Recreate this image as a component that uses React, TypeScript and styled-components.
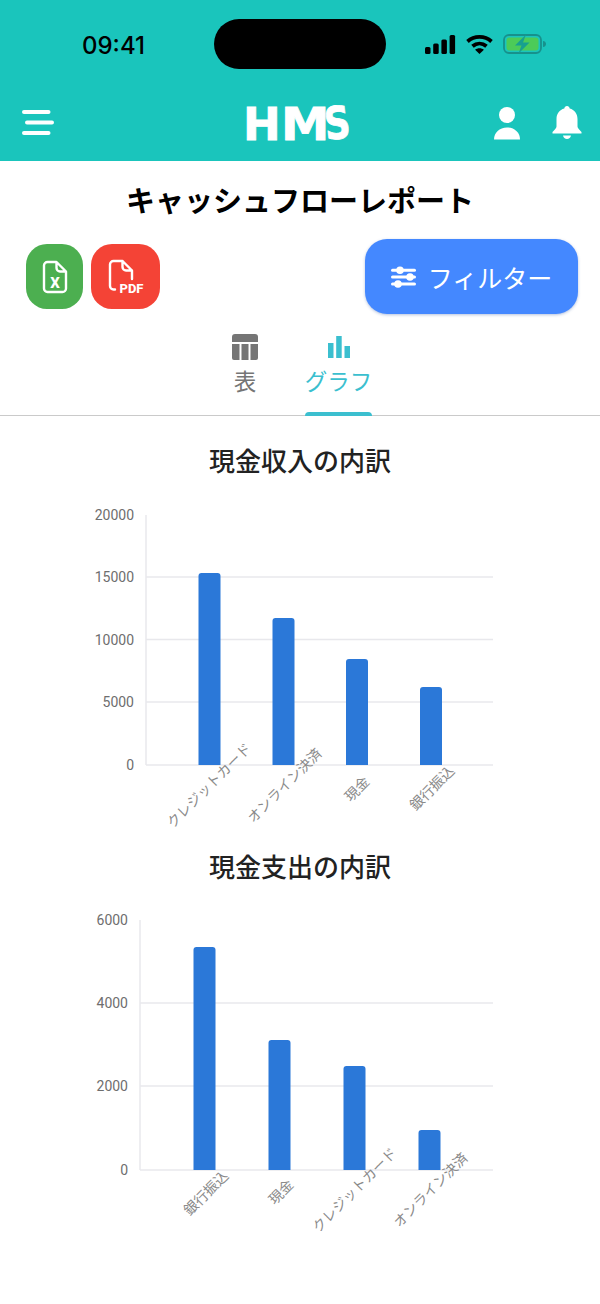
import React from "react";
import styled, { createGlobalStyle } from "styled-components";

const Global = createGlobalStyle`
  html, body { margin: 0; padding: 0; background: #fff; }
  body { font-family: "Roboto", "Noto Sans CJK JP", sans-serif; }
`;

const Page = styled.div`
  width: 600px;
  height: 1304px;
  background: #fff;
  overflow: hidden;
`;

const Header = styled.header`
  height: 161px;
  background: #1ac5bc;
  display: flex;
  flex-direction: column;
`;

const StatusBar = styled.div`
  height: 88px;
  padding-top: 19px;
  box-sizing: border-box;
  display: grid;
  grid-template-columns: 214px 172px 1fr;
`;

const Clock = styled.div`
  height: 50px;
  padding-left: 82px;
  font: 550 24px/53px "Inter", "Roboto", sans-serif;
  color: #000;
`;

const Island = styled.div`
  height: 50px;
  border-radius: 25px;
  background: #000;
`;

const StatusIcons = styled.div`
  height: 50px;
  padding-left: 39px;
  display: flex;
  align-items: center;
  gap: 10px;
`;

const NavBar = styled.nav`
  height: 73px;
  padding: 18px 18px 0 22px;
  box-sizing: border-box;
  display: grid;
  grid-template-columns: 224px 109px 1fr;
  align-items: start;
`;

const Logo = styled.div`
  display: flex;
  align-items: flex-end;
  height: 33px;
  margin-top: 2px;
  font: 700 45px/33px "DejaVu Sans", sans-serif;
  color: #fff;
  -webkit-text-stroke: 0.8px #fff;
  white-space: nowrap;
`;

const LogoLetter = styled.span<{ $tilt: number; $squeeze: number; $width: number }>`
  display: block;
  width: ${(p) => p.$width}px;
  transform: translateX(-3px) rotate(${(p) => p.$tilt}deg) scaleX(${(p) => p.$squeeze});
  transform-origin: left bottom;
`;

const NavIcons = styled.div`
  display: flex;
  justify-content: flex-end;
  gap: 32px;
  align-items: flex-start;
`;

const NavGlyph = styled.svg<{ $top?: number }>`
  display: block;
  margin-top: ${(p) => p.$top ?? 0}px;
  fill: #fff;
`;

const Title = styled.h1`
  margin: 0;
  height: 78px;
  padding-top: 16px;
  box-sizing: border-box;
  text-align: center;
  font: 700 29px/44px "Noto Sans CJK JP", sans-serif;
  color: #000;
`;

const Toolbar = styled.div`
  height: 75px;
  padding: 0 22px 0 26px;
  display: flex;
  justify-content: space-between;
`;

const ExportGroup = styled.div`
  display: flex;
  gap: 8px;
  padding-top: 5px;
`;

const ExportButton = styled.button<{ $color: string; $width: number }>`
  width: ${(p) => p.$width}px;
  height: 65px;
  border: 0;
  padding: 0;
  border-radius: 21px;
  background: ${(p) => p.$color};
  display: flex;
  align-items: center;
  justify-content: center;
`;

const FilterButton = styled.button`
  width: 213px;
  height: 75px;
  border: 0;
  padding: 0;
  border-radius: 22px;
  background: #4488ff;
  box-shadow: 0 1px 3px rgba(40, 80, 160, 0.35);
  color: #fff;
  display: flex;
  align-items: center;
  justify-content: center;
  gap: 12px;
  font: 400 25px/30px "Noto Sans CJK JP", sans-serif;
`;

const Tabs = styled.div`
  height: 102px;
  margin-bottom: 15px;
  box-sizing: border-box;
  border-bottom: 1.5px solid #cacaca;
  display: flex;
  justify-content: center;
  gap: 47px;
  padding: 20px 0 0 4px;
`;

const Tab = styled.div<{ $active?: boolean }>`
  position: relative;
  width: ${(p) => (p.$active ? 67 : 26)}px;
  height: 81px;
  display: flex;
  flex-direction: column;
  align-items: center;
  color: ${(p) => (p.$active ? "#3bbfcf" : "#757575")};
  font: 400 22.500px/30px "Noto Sans CJK JP", sans-serif;
  white-space: nowrap;
  svg { display: block; margin-bottom: 5px; }
  ${(p) =>
    p.$active
      ? `&::after { content: ""; position: absolute; left: 0; right: 0; bottom: -1px; height: 4px; border-radius: 4px 4px 0 0; background: #3bbfcf; }`
      : ""}
`;

const ChartSection = styled.section`
  display: flex;
  flex-direction: column;
`;

const ChartTitle = styled.h2`
  margin: 0;
  height: 60px;
  text-align: center;
  font: 500 26px/58px "Noto Sans CJK JP", sans-serif;
  color: #222;
`;

const ChartFrame = styled.svg`
  display: block;
  width: 600px;
  height: 346px;
`;

const AxisText = styled.text`
  font: 400 14px "Roboto", sans-serif;
  fill: #6e6e6e;
`;

const CategoryText = styled.text`
  font: 400 14px "Noto Sans CJK JP", sans-serif;
  fill: #8a8a8a;
`;

const IconText = styled.text<{ $size: number }>`
  font: 800 ${(p) => p.$size}px "Roboto", sans-serif;
  fill: #fff;
`;

type ChartData = {
  axisX: number;
  top: number;
  bottom: number;
  ticks: { label: string; y: number }[];
  bars: { x: number; top: number }[];
  labels: { text: string; cx: number; cy: number }[];
};

const Chart = ({ axisX, top, bottom, ticks, bars, labels }: ChartData) => (
  <ChartFrame viewBox="0 0 600 346">
    {ticks.map((t, i) => (
      <g key={t.label}>
        {i > 0 && <line x1={axisX} x2={493} y1={t.y} y2={t.y} stroke="#e8e8ec" strokeWidth={1.5} />}
        <AxisText x={axisX - 12} y={t.y + 5} textAnchor="end">{t.label}</AxisText>
      </g>
    ))}
    <line x1={axisX} x2={axisX} y1={top} y2={bottom} stroke="#e8e8ec" strokeWidth={1.5} />
    {bars.map((b) => (
      <path
        key={b.x}
        d={`M${b.x} ${bottom}V${b.top + 3}a3 3 0 0 1 3-3h16a3 3 0 0 1 3 3V${bottom}z`}
        fill="#2b78d8"
      />
    ))}
    {labels.map((l) => (
      <CategoryText
        key={l.text}
        x={l.cx}
        y={l.cy + 5}
        textAnchor="middle"
        transform={`rotate(-45 ${l.cx} ${l.cy})`}
      >
        {l.text}
      </CategoryText>
    ))}
  </ChartFrame>
);

const incoming: ChartData = {
  axisX: 146,
  top: 24,
  bottom: 274,
  ticks: [
    { label: "20000", y: 24 },
    { label: "15000", y: 86 },
    { label: "10000", y: 148.5 },
    { label: "5000", y: 211 },
    { label: "0", y: 274 },
  ],
  bars: [
    { x: 198.5, top: 82 },
    { x: 272.5, top: 127 },
    { x: 346, top: 168 },
    { x: 420, top: 196 },
  ],
  labels: [
    { text: "クレジットカード", cx: 209, cy: 294.5 },
    { text: "オンライン決済", cx: 284.5, cy: 294.5 },
    { text: "現金", cx: 357, cy: 298 },
    { text: "銀行振込", cx: 432, cy: 297 },
  ],
};

const outgoing: ChartData = {
  axisX: 140,
  top: 23,
  bottom: 273,
  ticks: [
    { label: "6000", y: 23 },
    { label: "4000", y: 106 },
    { label: "2000", y: 189 },
    { label: "0", y: 273 },
  ],
  bars: [
    { x: 193.5, top: 50 },
    { x: 268.5, top: 143 },
    { x: 343.5, top: 169 },
    { x: 418.5, top: 233 },
  ],
  labels: [
    { text: "銀行振込", cx: 206, cy: 296 },
    { text: "現金", cx: 281, cy: 295 },
    { text: "クレジットカード", cx: 354.5, cy: 293 },
    { text: "オンライン決済", cx: 430.5, cy: 293 },
  ],
};

const Signal = () => (
  <svg width="31" height="19" viewBox="0 0 31 19" fill="#000">
    <rect x="0" y="12" width="5.5" height="7" rx="1.5" />
    <rect x="8.2" y="8.5" width="5.5" height="10.5" rx="1.5" />
    <rect x="16.4" y="4.5" width="5.5" height="14.5" rx="1.5" />
    <rect x="24.6" y="0" width="5.5" height="19" rx="1.5" />
  </svg>
);

const Wifi = () => (
  <svg width="27" height="19" viewBox="0 0 27 19" fill="none" stroke="#000" strokeWidth="3.8">
    <path d="M1.500 6.500C8.300.4 18.700.4 25.500 6.500" />
    <path d="M6.500 11.300c4.200-3.700 9.800-3.700 14 0" />
    <path d="M13.500 19l-4.400-4.300c2.600-2 6.200-2 8.800 0z" fill="#000" stroke="none" />
  </svg>
);

const Battery = () => (
  <svg width="44" height="20" viewBox="0 0 44 20">
    <rect x="1" y="1" width="37" height="18" rx="5" fill="none" stroke="#17918c" strokeWidth="1.8" />
    <rect x="3.500" y="3.500" width="32" height="13" rx="3" fill="#4ccb58" />
    <path d="M40 7c2 .3 3 1.400 3 3s-1 2.700-3 3z" fill="#17918c" />
    <path d="M23 .5L12 11.500H18.500L15.500 19.500L26.500 8.500H20z" fill="#17a08f" />
  </svg>
);

const Menu = () => (
  <NavGlyph $top={4} width="33" height="26" viewBox="0 0 33 26">
    <rect x="0" y="0" width="28.500" height="4" rx="2" />
    <rect x="3" y="10.500" width="29" height="4" rx="2" />
    <rect x="0" y="21" width="28.500" height="4" rx="2" />
  </NavGlyph>
);

const Person = () => (
  <NavGlyph $top={1} width="26" height="33" viewBox="0 0 26 33">
    <circle cx="13" cy="8" r="8" />
    <path d="M0 32.500C0 25.500 5.500 20.500 13 20.500S26 25.500 26 32.500z" />
  </NavGlyph>
);

const Bell = () => (
  <NavGlyph width="30" height="34" viewBox="0 0 30 34">
    <path d="M15 0c1.500 0 2.500 1 2.700 2.500C22.500 3.800 25.500 7.800 25.500 13v7.500c0 1.500 2 3.500 4 5.500v1.500H.5V26c2-2 4-4 4-5.500V13C4.500 7.800 7.500 3.800 12.300 2.500 12.500 1 13.500 0 15 0z" />
    <path d="M11 29.500h8c-.4 2.200-2 3.500-4 3.500s-3.600-1.300-4-3.500z" />
  </NavGlyph>
);

const ExcelIcon = () => (
  <svg width="26" height="34" viewBox="0 0 26 34">
    <path
      d="M14.500 2H5.500A3.500 3.500 0 0 0 2 5.500v23A3.500 3.500 0 0 0 5.500 32h15a3.500 3.500 0 0 0 3.500-3.500V11.500L14.500 2v6a3.500 3.500 0 0 0 3.500 3.500h6"
      fill="none"
      stroke="#fff"
      strokeWidth="2.400"
      strokeLinejoin="round"
    />
    <IconText $size={15} x="13" y="27.500" textAnchor="middle">X</IconText>
  </svg>
);

const PdfIcon = () => (
  <svg width="36" height="36" viewBox="0 0 36 36">
    <path
      d="M7 30.500H5.500A3.500 3.500 0 0 1 2 27V5.500A3.500 3.500 0 0 1 5.500 2h9L24 11.500V20M14.500 2v6a3.500 3.500 0 0 0 3.500 3.500h6"
      fill="none"
      stroke="#fff"
      strokeWidth="2.400"
      strokeLinejoin="round"
      strokeLinecap="round"
    />
    <IconText $size={13} x="23.500" y="33.500" textAnchor="middle">PDF</IconText>
  </svg>
);

const SlidersIcon = () => (
  <svg width="25" height="22" viewBox="0 0 25 22" fill="#fff">
    <rect x="0" y="2.700" width="25" height="3" rx="1.500" />
    <rect x="0" y="9.500" width="25" height="3" rx="1.500" />
    <rect x="0" y="16.500" width="25" height="3" rx="1.500" />
    <circle cx="9" cy="4.200" r="3.800" />
    <circle cx="19" cy="11" r="3.800" />
    <circle cx="7" cy="18" r="3.800" />
  </svg>
);

const TableIcon = () => (
  <svg width="26" height="26" viewBox="0 0 26 26" fill="#757575">
    <path d="M0 3a3 3 0 0 1 3-3h20a3 3 0 0 1 3 3v5H0z" />
    <path d="M0 10h7.500v16H2a2 2 0 0 1-2-2z" />
    <rect x="9.500" y="10" width="7" height="16" />
    <path d="M18.500 10H26v14a2 2 0 0 1-2 2h-5.500z" />
  </svg>
);

const BarsIcon = () => (
  <svg width="26" height="26" viewBox="0 0 26 26" fill="#3bbfcf">
    <rect x="2" y="9" width="5.500" height="15" />
    <rect x="10.200" y="2" width="5.500" height="22" />
    <rect x="18.500" y="12" width="5.500" height="12" />
  </svg>
);

export default function App() {
  return (
    <Page>
      <Global />
      <Header>
        <StatusBar>
          <Clock>09:41</Clock>
          <Island />
          <StatusIcons>
            <Signal />
            <Wifi />
            <Battery />
          </StatusIcons>
        </StatusBar>
        <NavBar>
          <Menu />
          <Logo>
            <LogoLetter $tilt={0} $squeeze={1} $width={38}>H</LogoLetter>
            <LogoLetter $tilt={0} $squeeze={1.08} $width={49}>M</LogoLetter>
            <LogoLetter $tilt={-6} $squeeze={0.8} $width={26}>S</LogoLetter>
          </Logo>
          <NavIcons>
            <Person />
            <Bell />
          </NavIcons>
        </NavBar>
      </Header>
      <Title>キャッシュフローレポート</Title>
      <Toolbar>
        <ExportGroup>
          <ExportButton $color="#4caf50" $width={57}><ExcelIcon /></ExportButton>
          <ExportButton $color="#f44336" $width={69}><PdfIcon /></ExportButton>
        </ExportGroup>
        <FilterButton><SlidersIcon />フィルター</FilterButton>
      </Toolbar>
      <Tabs>
        <Tab><TableIcon />表</Tab>
        <Tab $active><BarsIcon />グラフ</Tab>
      </Tabs>
      <ChartSection>
        <ChartTitle>現金収入の内訳</ChartTitle>
        <Chart {...incoming} />
      </ChartSection>
      <ChartSection>
        <ChartTitle>現金支出の内訳</ChartTitle>
        <Chart {...outgoing} />
      </ChartSection>
    </Page>
  );
}
